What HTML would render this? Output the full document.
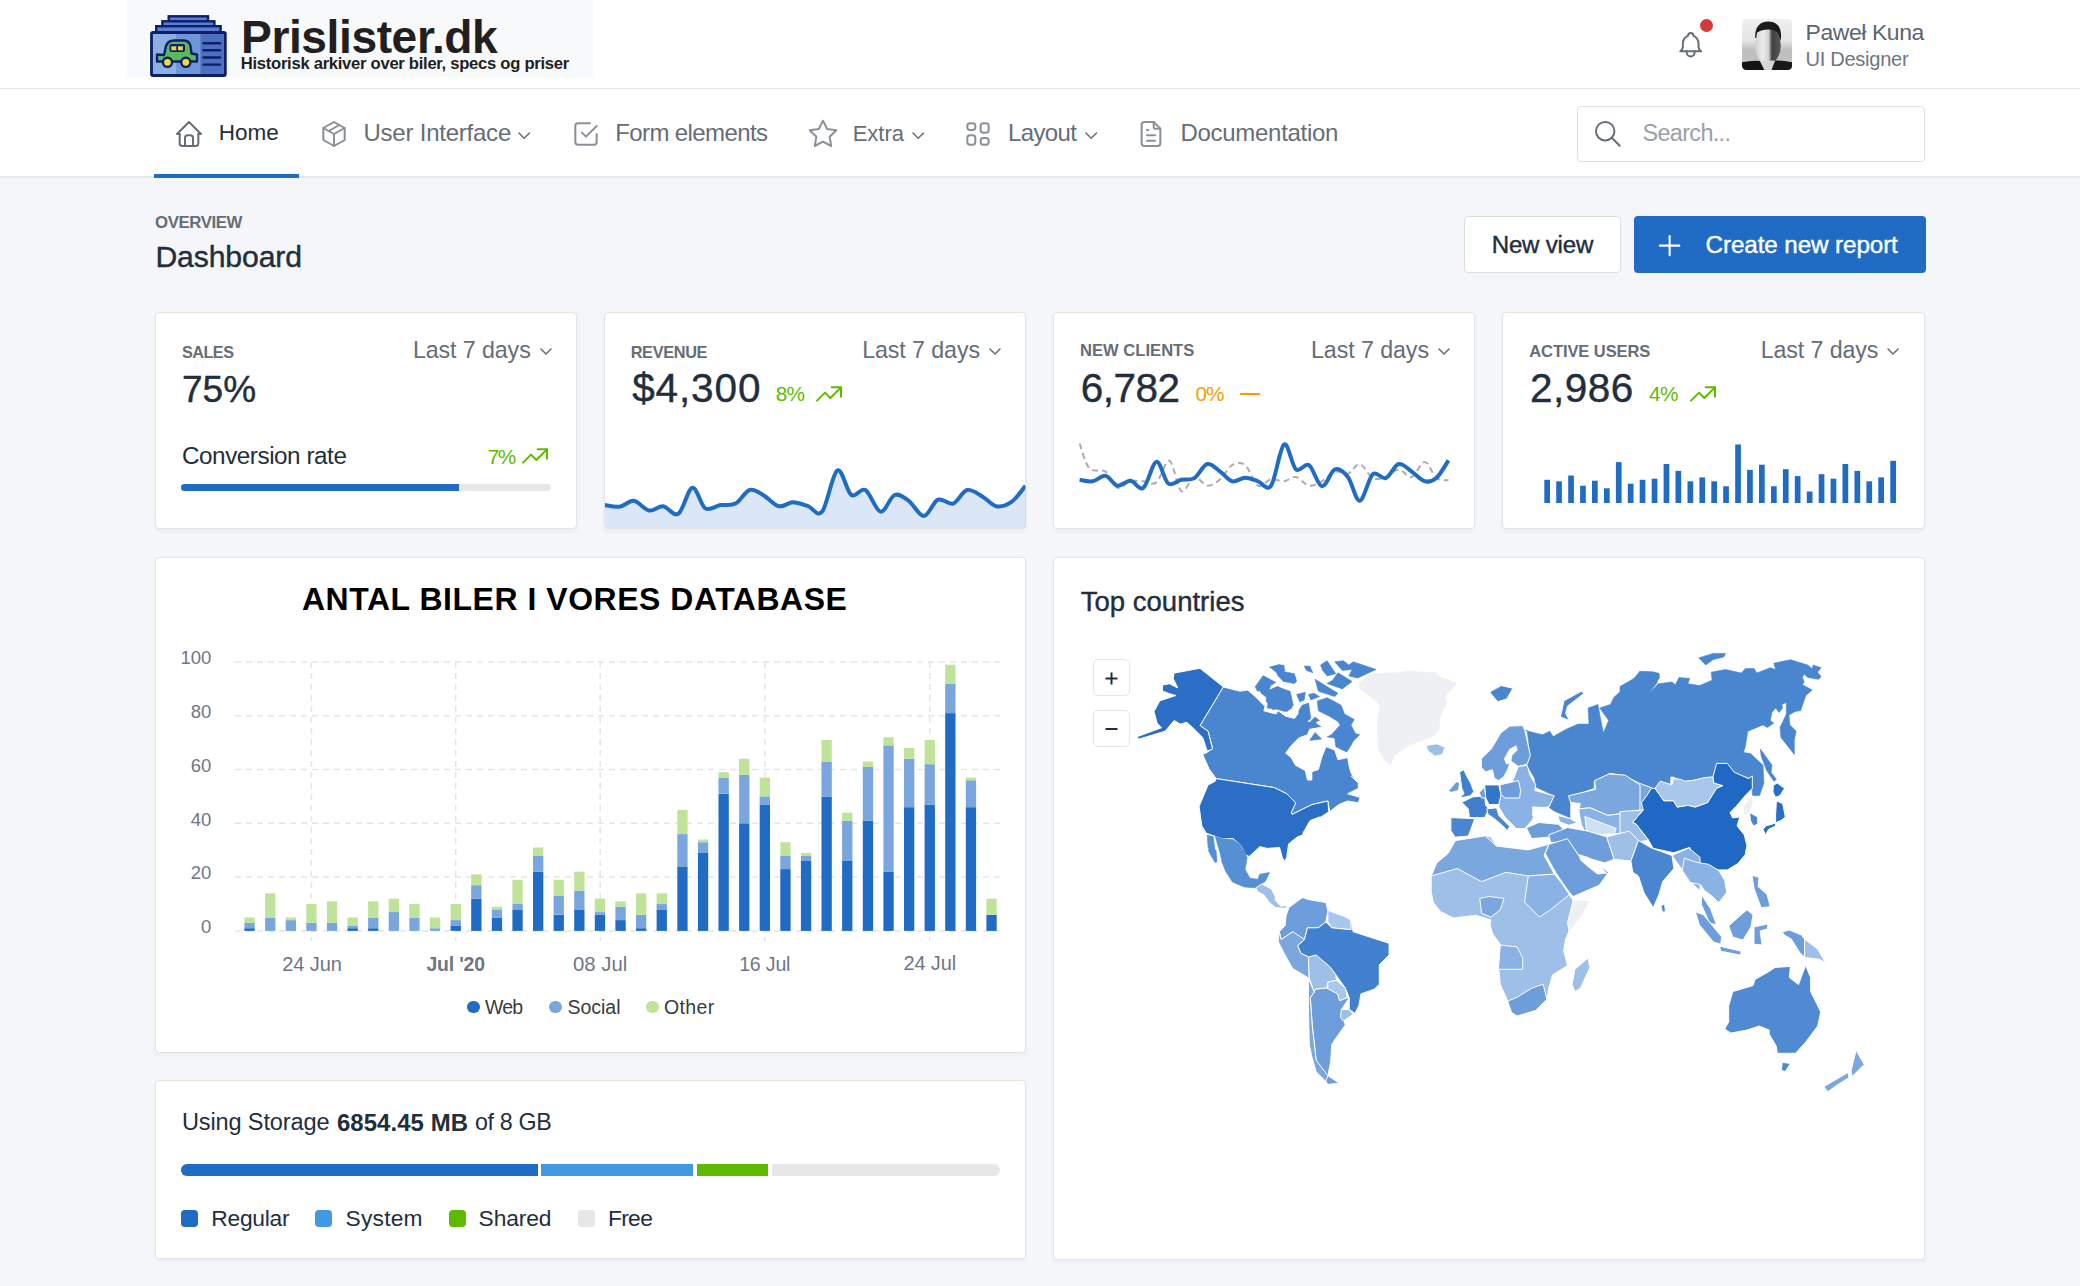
<!DOCTYPE html><html><head><meta charset="utf-8"><title>Dashboard</title><style>
html,body{margin:0;padding:0;}
body{width:2080px;height:1286px;position:relative;overflow:hidden;background:#f4f6fa;font-family:"Liberation Sans",sans-serif;}
.t{position:absolute;line-height:1;white-space:nowrap;}
.card{position:absolute;background:#fff;border:1px solid #e2e4e8;border-radius:4px;box-shadow:0 2px 4px rgba(35,46,60,.05);box-sizing:border-box;}
</style></head><body>
<div style="position:absolute;left:0px;top:0px;width:2080px;height:88px;background:#fff"></div>
<div style="position:absolute;left:0px;top:88px;width:2080px;height:1px;background:#e4e6e9"></div>
<div style="position:absolute;left:0px;top:89px;width:2080px;height:88px;background:#fff"></div>
<div style="position:absolute;left:0px;top:176px;width:2080px;height:2px;background:#e6e8eb"></div>
<div style="position:absolute;left:127px;top:0px;width:466px;height:77px;background:#f8f9fb"></div>
<svg style="position:absolute;left:148px;top:14px" width="82" height="66" viewBox="148 14 82 66">
<rect x="168.7" y="16.3" width="39.3" height="6" fill="#5b7fd0" stroke="#0d1f6b" stroke-width="2.4"/>
<rect x="162.4" y="21.3" width="52" height="6" fill="#5b7fd0" stroke="#0d1f6b" stroke-width="2.4"/>
<rect x="156.2" y="26.2" width="64.4" height="6" fill="#5b7fd0" stroke="#0d1f6b" stroke-width="2.4"/>
<rect x="151.5" y="32.5" width="73.8" height="43" rx="1.5" fill="#6e96d8" stroke="#0d1f6b" stroke-width="2.8"/>
<rect x="153" y="34" width="23" height="40" fill="#8cb0e2"/>
<rect x="200.5" y="34" width="23.3" height="40" fill="#4d6fc0"/>
<g stroke="#0d1f6b" stroke-width="2.4" stroke-linecap="round"><line x1="203.5" y1="43.3" x2="220" y2="43.3"/><line x1="203.5" y1="50.3" x2="220" y2="50.3"/><line x1="203.5" y1="57.5" x2="220" y2="57.5"/><line x1="203.5" y1="64.6" x2="220" y2="64.6"/></g>
<path d="M164 55 L166 46 Q168 40.5 174 40.5 L184 40.5 Q189 40.5 190.5 46 L191.5 53.5 L197 54.5 L197 61.5 L157 61.5 L157 54.5 Z" fill="#5cb85c" stroke="#0d1f6b" stroke-width="2.4" stroke-linejoin="round"/>
<rect x="169.5" y="44" width="15.5" height="8" rx="2" fill="#0d1f6b"/><rect x="171.3" y="46.3" width="5" height="4" fill="#e8d64a"/><rect x="178" y="46.3" width="4.8" height="4" fill="#e8d64a"/>
<circle cx="167.5" cy="62.3" r="4.6" fill="#f2d936" stroke="#0d1f6b" stroke-width="2.4"/>
<circle cx="185.8" cy="62.3" r="4.6" fill="#f2d936" stroke="#0d1f6b" stroke-width="2.4"/>
</svg>
<div class="t" style="left:241.0px;top:13.7px;font-size:46.18px;letter-spacing:-0.42px;color:#231f20;font-weight:700;">Prislister.dk</div>
<div class="t" style="left:240.8px;top:56.0px;font-size:16.63px;letter-spacing:-0.28px;color:#231f20;font-weight:700;">Historisk arkiver over biler, specs og priser</div>
<svg style="position:absolute;left:1674.8px;top:28.8px" width="31.4" height="31.4" viewBox="0 0 24 24" fill="none" stroke="#656d77" stroke-width="1.5" stroke-linecap="round" stroke-linejoin="round"><path d="M10 5a2 2 0 0 1 4 0a7 7 0 0 1 4 6v3a4 4 0 0 0 2 3h-16a4 4 0 0 0 2 -3v-3a7 7 0 0 1 4 -6"/><path d="M9 17v1a3 3 0 0 0 6 0v-1"/></svg>
<div style="position:absolute;left:1699.5px;top:19.25px;width:13px;height:13px;border-radius:50%;background:#d63939"></div>
<svg style="position:absolute;left:1741.8px;top:19.3px" width="50.2" height="51" viewBox="0 0 50.2 51">
<defs><clipPath id="avc"><rect width="50.2" height="51" rx="4.5"/></clipPath>
<linearGradient id="avbg" x1="0" y1="0" x2="0" y2="1"><stop offset="0" stop-color="#efefef"/><stop offset=".42" stop-color="#e4e4e4"/><stop offset=".62" stop-color="#bdbdbd"/><stop offset="1" stop-color="#c6c6c6"/></linearGradient>
<linearGradient id="avface" x1="0" y1="0" x2="1" y2="0"><stop offset="0" stop-color="#d0d0d0"/><stop offset=".3" stop-color="#ececec"/><stop offset=".52" stop-color="#d2d2d2"/><stop offset=".66" stop-color="#404040"/><stop offset="1" stop-color="#575757"/></linearGradient></defs>
<g clip-path="url(#avc)">
<rect width="50.2" height="51" fill="url(#avbg)"/>
<ellipse cx="26" cy="26.5" rx="12.8" ry="18.5" fill="url(#avface)"/>
<path d="M13.2 19 Q12.5 3 26.5 2.5 Q40 3 39 19 L38.2 22 Q36.5 11.5 30 10.8 Q21 9.8 15.2 13.5 L14.2 19 Z" fill="#1b1b1b"/>
<path d="M-1 43.5 Q10 41 18 42 L23 52 L-1 52 Z" fill="#141414"/>
<path d="M51 43.5 Q42 41 33 41.5 L29 52 L51 52 Z" fill="#191919"/>
<path d="M18 42 L33 41.5 L29 52 L23 52 Z" fill="#d6d6d6"/>
</g></svg>
<div class="t" style="left:1805.5px;top:20.6px;font-size:22.95px;letter-spacing:-0.40px;color:#5c6571;">Paweł Kuna</div>
<div class="t" style="left:1805.5px;top:48.5px;font-size:20.13px;letter-spacing:-0.31px;color:#6e7681;">UI Designer</div>
<svg style="position:absolute;left:173.3px;top:117.5px" width="32.0" height="32.0" viewBox="0 0 24 24" fill="none" stroke="#656d77" stroke-width="1.5" stroke-linecap="round" stroke-linejoin="round"><polyline points="5 12 3 12 12 3 21 12 19 12"/><path d="M5 12v7a2 2 0 0 0 2 2h10a2 2 0 0 0 2 -2v-7"/><path d="M9 21v-6a2 2 0 0 1 2 -2h2a2 2 0 0 1 2 2v6"/></svg>
<div class="t" style="left:218.7px;top:122.4px;font-size:22.51px;letter-spacing:0.00px;color:#232e3c;">Home</div>
<svg style="position:absolute;left:317.7px;top:117.5px" width="32.0" height="32.0" viewBox="0 0 24 24" fill="none" stroke="#8a9099" stroke-width="1.5" stroke-linecap="round" stroke-linejoin="round"><polyline points="12 3 20 7.5 20 16.5 12 21 4 16.5 4 7.5 12 3"/><line x1="12" y1="12" x2="20" y2="7.5"/><line x1="12" y1="12" x2="12" y2="21"/><line x1="12" y1="12" x2="4" y2="7.5"/><line x1="16" y1="5.25" x2="8" y2="9.75"/></svg>
<div class="t" style="left:363.5px;top:121.2px;font-size:24.00px;letter-spacing:-0.23px;color:#656d77;">User Interface</div>
<svg style="position:absolute;left:516.8px;top:130.7px" width="14.5" height="9.2"><polyline points="2,2 7.2,7.2 12.5,2" fill="none" stroke="#656d77" stroke-width="1.5" stroke-linecap="round" stroke-linejoin="round"/></svg>
<svg style="position:absolute;left:570.1px;top:117.5px" width="32.0" height="32.0" viewBox="0 0 24 24" fill="none" stroke="#8a9099" stroke-width="1.5" stroke-linecap="round" stroke-linejoin="round"><polyline points="9 11 12 14 20 6"/><path d="M20 12v6a2 2 0 0 1 -2 2h-12a2 2 0 0 1 -2 -2v-12a2 2 0 0 1 2 -2h9"/></svg>
<div class="t" style="left:615.2px;top:121.2px;font-size:24.00px;letter-spacing:-0.60px;color:#656d77;">Form elements</div>
<svg style="position:absolute;left:806.6px;top:117.5px" width="32.0" height="32.0" viewBox="0 0 24 24" fill="none" stroke="#8a9099" stroke-width="1.5" stroke-linecap="round" stroke-linejoin="round"><path d="M12 17.75l-6.172 3.245l1.179 -6.873l-5 -4.867l6.9 -1l3.086 -6.253l3.086 6.253l6.9 1l-5 4.867l1.179 6.873z"/></svg>
<div class="t" style="left:852.7px;top:122.9px;font-size:22.01px;letter-spacing:0.00px;color:#656d77;">Extra</div>
<svg style="position:absolute;left:911.0px;top:130.7px" width="14.5" height="9.2"><polyline points="2,2 7.2,7.2 12.5,2" fill="none" stroke="#656d77" stroke-width="1.5" stroke-linecap="round" stroke-linejoin="round"/></svg>
<svg style="position:absolute;left:962.0px;top:117.5px" width="32.0" height="32.0" viewBox="0 0 24 24" fill="none" stroke="#8a9099" stroke-width="1.5" stroke-linecap="round" stroke-linejoin="round"><rect x="4" y="4" width="6" height="5" rx="2"/><rect x="4" y="13" width="6" height="7" rx="2"/><rect x="14" y="4" width="6" height="7" rx="2"/><rect x="14" y="15" width="6" height="5" rx="2"/></svg>
<div class="t" style="left:1008.0px;top:121.2px;font-size:24.00px;letter-spacing:-0.62px;color:#656d77;">Layout</div>
<svg style="position:absolute;left:1084.2px;top:130.7px" width="14.5" height="9.2"><polyline points="2,2 7.2,7.2 12.5,2" fill="none" stroke="#656d77" stroke-width="1.5" stroke-linecap="round" stroke-linejoin="round"/></svg>
<svg style="position:absolute;left:1134.7px;top:117.5px" width="32.0" height="32.0" viewBox="0 0 24 24" fill="none" stroke="#8a9099" stroke-width="1.5" stroke-linecap="round" stroke-linejoin="round"><path d="M14 3v4a1 1 0 0 0 1 1h4"/><path d="M17 21h-10a2 2 0 0 1 -2 -2v-14a2 2 0 0 1 2 -2h7l5 5v11a2 2 0 0 1 -2 2z"/><line x1="9" y1="9" x2="10" y2="9"/><line x1="9" y1="13" x2="15" y2="13"/><line x1="9" y1="17" x2="15" y2="17"/></svg>
<div class="t" style="left:1180.4px;top:121.2px;font-size:24.00px;letter-spacing:-0.28px;color:#656d77;">Documentation</div>
<div style="position:absolute;left:154px;top:174px;width:145px;height:3.5px;background:#206bc4"></div>
<div style="position:absolute;left:1576.5px;top:105.5px;width:348.5px;height:56px;box-sizing:border-box;border:1.5px solid #dcdfe3;border-radius:4px;background:#fff"></div>
<svg style="position:absolute;left:1592.0px;top:118.0px" width="31.7" height="31.7" viewBox="0 0 24 24" fill="none" stroke="#656d77" stroke-width="1.5" stroke-linecap="round" stroke-linejoin="round"><circle cx="10" cy="10" r="7"/><line x1="21" y1="21" x2="15" y2="15"/></svg>
<div class="t" style="left:1642.5px;top:122.2px;font-size:23.42px;letter-spacing:-0.65px;color:#9aa0ac;">Search...</div>
<div class="t" style="left:155.0px;top:214.7px;font-size:16.80px;letter-spacing:-0.40px;color:#656d77;font-weight:700;">OVERVIEW</div>
<div class="t" style="left:155.4px;top:241.5px;font-size:30.20px;letter-spacing:-0.13px;color:#232e3c;-webkit-text-stroke:0.4px #232e3c;">Dashboard</div>
<div style="position:absolute;left:1464px;top:216px;width:156.5px;height:57px;box-sizing:border-box;border:1.5px solid #dadde1;border-radius:4px;background:#fff"></div>
<div class="t" style="left:1491.7px;top:233.3px;font-size:24.09px;letter-spacing:-0.20px;color:#232e3c;-webkit-text-stroke:0.4px #232e3c;">New view</div>
<div style="position:absolute;left:1633.5px;top:216px;width:292px;height:57px;border-radius:4px;background:#206bc4"></div>
<svg style="position:absolute;left:1653.0px;top:228.6px" width="33.3" height="33.3" viewBox="0 0 24 24" fill="none" stroke="#fff" stroke-width="1.5" stroke-linecap="round" stroke-linejoin="round"><line x1="12" y1="5" x2="12" y2="19"/><line x1="5" y1="12" x2="19" y2="12"/></svg>
<div class="t" style="left:1705.6px;top:233.2px;font-size:24.23px;letter-spacing:-0.10px;color:#fff;-webkit-text-stroke:0.4px #fff;">Create new report</div>
<div class="card" style="left:155px;top:312px;width:422px;height:217px"></div>
<div class="card" style="left:604px;top:312px;width:422px;height:217px"></div>
<div class="card" style="left:1053px;top:312px;width:422px;height:217px"></div>
<div class="card" style="left:1502px;top:312px;width:423px;height:217px"></div>
<div class="t" style="left:182.0px;top:343.7px;font-size:16.18px;letter-spacing:-0.49px;color:#656d77;font-weight:700;">SALES</div>
<div class="t" style="left:412.9px;top:339.3px;font-size:23.23px;letter-spacing:-0.09px;color:#656d77;">Last 7 days</div>
<svg style="position:absolute;left:538.8px;top:346.9px" width="14.0" height="9.0"><polyline points="2,2 7.0,7.0 12.0,2" fill="none" stroke="#656d77" stroke-width="1.5" stroke-linecap="round" stroke-linejoin="round"/></svg>
<div class="t" style="left:182.0px;top:371.1px;font-size:37.00px;letter-spacing:0.00px;color:#232e3c;-webkit-text-stroke:0.4px #232e3c;">75%</div>
<div class="t" style="left:182.0px;top:444.2px;font-size:24.25px;letter-spacing:-0.45px;color:#232e3c;">Conversion rate</div>
<div class="t" style="left:487.8px;top:447.1px;font-size:20.80px;letter-spacing:-1.56px;color:#5eba00;">7%</div>
<svg style="position:absolute;left:519.0px;top:439.5px" width="32.0" height="32.0" viewBox="0 0 24 24" fill="none" stroke="#5eba00" stroke-width="1.5" stroke-linecap="round" stroke-linejoin="round"><polyline points="3 17 9 11 13 15 21 7"/><polyline points="14 7 21 7 21 14"/></svg>
<div style="position:absolute;left:181px;top:484px;width:370px;height:6.5px;border-radius:4px;background:#e6e7e9;overflow:hidden"><div style="width:278px;height:100%;background:#206bc4"></div></div>
<div class="t" style="left:630.7px;top:343.6px;font-size:16.30px;letter-spacing:-0.33px;color:#656d77;font-weight:700;">REVENUE</div>
<div class="t" style="left:862.2px;top:339.3px;font-size:23.23px;letter-spacing:-0.09px;color:#656d77;">Last 7 days</div>
<svg style="position:absolute;left:988.1px;top:346.9px" width="14.0" height="9.0"><polyline points="2,2 7.0,7.0 12.0,2" fill="none" stroke="#656d77" stroke-width="1.5" stroke-linecap="round" stroke-linejoin="round"/></svg>
<div class="t" style="left:632.2px;top:368.1px;font-size:40.50px;letter-spacing:0.87px;color:#232e3c;-webkit-text-stroke:0.4px #232e3c;">$4,300</div>
<div class="t" style="left:775.7px;top:384.1px;font-size:20.80px;letter-spacing:-0.86px;color:#5eba00;">8%</div>
<svg style="position:absolute;left:812.7px;top:377.7px" width="32.0" height="32.0" viewBox="0 0 24 24" fill="none" stroke="#5eba00" stroke-width="1.5" stroke-linecap="round" stroke-linejoin="round"><polyline points="3 17 9 11 13 15 21 7"/><polyline points="14 7 21 7 21 14"/></svg>
<div class="t" style="left:1080.0px;top:343.4px;font-size:16.58px;letter-spacing:0.01px;color:#656d77;font-weight:700;">NEW CLIENTS</div>
<div class="t" style="left:1311.0px;top:339.3px;font-size:23.24px;letter-spacing:-0.08px;color:#656d77;">Last 7 days</div>
<svg style="position:absolute;left:1437.0px;top:346.9px" width="14.0" height="9.0"><polyline points="2,2 7.0,7.0 12.0,2" fill="none" stroke="#656d77" stroke-width="1.5" stroke-linecap="round" stroke-linejoin="round"/></svg>
<div class="t" style="left:1080.7px;top:368.1px;font-size:40.50px;letter-spacing:-0.49px;color:#232e3c;-webkit-text-stroke:0.4px #232e3c;">6,782</div>
<div class="t" style="left:1195.4px;top:384.1px;font-size:20.80px;letter-spacing:-0.86px;color:#f59f00;">0%</div>
<svg style="position:absolute;left:1233.6px;top:377.7px" width="32.0" height="32.0" viewBox="0 0 24 24" fill="none" stroke="#f59f00" stroke-width="1.5" stroke-linecap="round" stroke-linejoin="round"><line x1="5" y1="12" x2="19" y2="12"/></svg>
<div class="t" style="left:1529.2px;top:343.4px;font-size:16.50px;letter-spacing:-0.07px;color:#656d77;font-weight:700;">ACTIVE USERS</div>
<div class="t" style="left:1760.7px;top:339.4px;font-size:23.21px;letter-spacing:-0.10px;color:#656d77;">Last 7 days</div>
<svg style="position:absolute;left:1886.4px;top:346.9px" width="14.0" height="9.0"><polyline points="2,2 7.0,7.0 12.0,2" fill="none" stroke="#656d77" stroke-width="1.5" stroke-linecap="round" stroke-linejoin="round"/></svg>
<div class="t" style="left:1530.0px;top:368.1px;font-size:40.50px;letter-spacing:0.51px;color:#232e3c;-webkit-text-stroke:0.4px #232e3c;">2,986</div>
<div class="t" style="left:1649.0px;top:384.1px;font-size:20.80px;letter-spacing:-0.56px;color:#5eba00;">4%</div>
<svg style="position:absolute;left:1687.4px;top:377.7px" width="32.0" height="32.0" viewBox="0 0 24 24" fill="none" stroke="#5eba00" stroke-width="1.5" stroke-linecap="round" stroke-linejoin="round"><polyline points="3 17 9 11 13 15 21 7"/><polyline points="14 7 21 7 21 14"/></svg>
<svg style="position:absolute;left:0;top:0" width="2080" height="1286"><clipPath id="rc"><rect x="605" y="313" width="420.5" height="215" rx="3"/></clipPath><g clip-path="url(#rc)"><path d="M604.7,505.1 C607.3,505.4 615.0,507.4 619.9,506.6 C624.7,505.9 629.1,500.2 633.9,500.8 C638.8,501.5 644.2,509.6 649.1,510.5 C654.0,511.4 658.3,505.7 663.2,506.2 C668.0,506.8 673.4,516.8 678.3,513.8 C683.2,510.7 687.9,488.7 692.4,487.8 C696.9,486.9 700.7,505.5 705.3,508.4 C710.0,511.3 715.4,505.9 720.5,505.1 C725.5,504.3 730.8,506.1 735.6,503.6 C740.5,501.1 745.0,491.4 749.7,490.0 C754.4,488.6 758.9,492.7 763.8,495.4 C768.6,498.1 774.0,505.1 778.9,506.2 C783.8,507.4 788.1,502.3 793.0,502.3 C797.8,502.3 803.2,504.7 808.1,506.2 C813.0,507.8 817.3,517.6 822.2,511.6 C827.0,505.7 832.5,473.3 837.3,470.5 C842.2,467.7 846.7,491.7 851.4,495.0 C856.1,498.2 860.6,487.2 865.4,490.0 C870.3,492.8 875.7,510.8 880.6,511.6 C885.5,512.4 890.0,496.8 894.7,495.0 C899.3,493.2 903.8,497.3 908.7,500.8 C913.6,504.3 919.0,516.1 923.9,515.9 C928.7,515.8 933.1,501.8 937.9,499.7 C942.8,497.7 948.2,505.2 953.1,503.6 C957.9,502.0 962.3,491.2 967.1,490.0 C972.0,488.8 977.4,493.8 982.3,496.5 C987.1,499.2 991.5,505.3 996.3,506.2 C1001.2,507.1 1006.6,505.3 1011.5,501.9 C1016.4,498.5 1023.2,488.4 1025.5,485.7 L1030,529 L600,529 Z" fill="#206bc4" fill-opacity="0.16"/><path d="M604.7,505.1 C607.3,505.4 615.0,507.4 619.9,506.6 C624.7,505.9 629.1,500.2 633.9,500.8 C638.8,501.5 644.2,509.6 649.1,510.5 C654.0,511.4 658.3,505.7 663.2,506.2 C668.0,506.8 673.4,516.8 678.3,513.8 C683.2,510.7 687.9,488.7 692.4,487.8 C696.9,486.9 700.7,505.5 705.3,508.4 C710.0,511.3 715.4,505.9 720.5,505.1 C725.5,504.3 730.8,506.1 735.6,503.6 C740.5,501.1 745.0,491.4 749.7,490.0 C754.4,488.6 758.9,492.7 763.8,495.4 C768.6,498.1 774.0,505.1 778.9,506.2 C783.8,507.4 788.1,502.3 793.0,502.3 C797.8,502.3 803.2,504.7 808.1,506.2 C813.0,507.8 817.3,517.6 822.2,511.6 C827.0,505.7 832.5,473.3 837.3,470.5 C842.2,467.7 846.7,491.7 851.4,495.0 C856.1,498.2 860.6,487.2 865.4,490.0 C870.3,492.8 875.7,510.8 880.6,511.6 C885.5,512.4 890.0,496.8 894.7,495.0 C899.3,493.2 903.8,497.3 908.7,500.8 C913.6,504.3 919.0,516.1 923.9,515.9 C928.7,515.8 933.1,501.8 937.9,499.7 C942.8,497.7 948.2,505.2 953.1,503.6 C957.9,502.0 962.3,491.2 967.1,490.0 C972.0,488.8 977.4,493.8 982.3,496.5 C987.1,499.2 991.5,505.3 996.3,506.2 C1001.2,507.1 1006.6,505.3 1011.5,501.9 C1016.4,498.5 1023.2,488.4 1025.5,485.7" fill="none" stroke="#206bc4" stroke-width="4" stroke-linejoin="round"/></g>
<path d="M1079.6,443.5 C1081.2,447.6 1085.0,463.7 1089.4,468.3 C1093.7,473.0 1100.9,468.3 1105.6,471.6 C1110.3,474.8 1113.3,486.2 1117.5,487.8 C1121.6,489.4 1126.1,482.4 1130.5,481.3 C1134.8,480.2 1139.1,481.2 1143.4,481.3 C1147.8,481.5 1152.1,485.8 1156.4,482.4 C1160.8,479.0 1165.3,459.3 1169.4,460.8 C1173.6,462.2 1177.2,488.4 1181.3,491.1 C1185.5,493.8 1190.0,477.9 1194.3,477.0 C1198.6,476.1 1202.9,485.3 1207.3,485.7 C1211.6,486.0 1216.1,482.6 1220.2,479.2 C1224.4,475.7 1228.0,467.4 1232.1,465.1 C1236.3,462.8 1240.8,461.7 1245.1,465.1 C1249.5,468.5 1253.8,483.3 1258.1,485.7 C1262.4,488.0 1266.8,479.9 1271.1,479.2 C1275.4,478.4 1279.9,481.7 1284.1,481.3 C1288.2,481.0 1291.8,476.3 1296.0,477.0 C1300.1,477.7 1304.6,484.9 1309.0,485.7 C1313.3,486.4 1317.6,483.7 1321.9,481.3 C1326.3,479.0 1330.6,472.9 1334.9,471.6 C1339.2,470.3 1343.8,475.0 1347.9,473.8 C1352.0,472.5 1355.7,463.3 1359.8,464.0 C1363.9,464.7 1368.5,475.9 1372.8,478.1 C1377.1,480.2 1381.4,478.4 1385.8,477.0 C1390.1,475.6 1394.4,469.4 1398.7,469.4 C1403.1,469.4 1407.4,478.3 1411.7,477.0 C1416.1,475.7 1420.6,461.7 1424.7,461.9 C1428.9,462.0 1432.6,475.0 1436.6,478.1 C1440.6,481.2 1446.5,479.9 1448.5,480.2" fill="none" stroke="#a9aeb5" stroke-width="2" stroke-dasharray="6,4"/>
<path d="M1079.6,479.8 C1081.8,480.1 1088.3,482.0 1092.6,481.3 C1096.9,480.7 1101.4,475.2 1105.6,475.9 C1109.7,476.6 1113.3,484.9 1117.5,485.7 C1121.6,486.5 1126.1,480.3 1130.5,480.7 C1134.8,481.0 1139.1,491.0 1143.4,487.8 C1147.8,484.7 1152.3,462.6 1156.4,461.9 C1160.6,461.1 1164.2,480.5 1168.3,483.5 C1172.5,486.5 1177.0,480.7 1181.3,479.8 C1185.6,478.9 1190.0,480.7 1194.3,478.1 C1198.6,475.5 1202.9,465.1 1207.3,464.0 C1211.6,462.9 1216.1,468.7 1220.2,471.6 C1224.4,474.5 1228.0,480.3 1232.1,481.3 C1236.3,482.3 1240.8,477.7 1245.1,477.7 C1249.5,477.7 1253.8,480.0 1258.1,481.3 C1262.4,482.7 1266.8,491.8 1271.1,485.7 C1275.4,479.5 1279.9,447.3 1284.1,444.5 C1288.2,441.8 1291.8,466.0 1296.0,469.4 C1300.1,472.9 1304.6,462.3 1309.0,465.1 C1313.3,467.9 1317.6,485.6 1321.9,486.3 C1326.3,487.0 1330.6,471.0 1334.9,469.4 C1339.2,467.9 1343.8,471.8 1347.9,477.0 C1352.0,482.2 1355.7,501.3 1359.8,500.8 C1363.9,500.3 1368.5,478.0 1372.8,474.2 C1377.1,470.4 1381.4,479.8 1385.8,478.1 C1390.1,476.4 1394.4,465.1 1398.7,464.0 C1403.1,462.9 1407.4,468.7 1411.7,471.6 C1416.1,474.5 1420.6,480.3 1424.7,481.3 C1428.9,482.3 1432.6,481.2 1436.6,477.7 C1440.6,474.2 1446.5,463.2 1448.5,460.3" fill="none" stroke="#206bc4" stroke-width="4" stroke-linejoin="round"/>
<rect x="1544.3" y="479.8" width="5.7" height="23.2" fill="#206bc4"/>
<rect x="1556.2" y="481.3" width="5.7" height="21.7" fill="#206bc4"/>
<rect x="1568.2" y="475.5" width="5.7" height="27.5" fill="#206bc4"/>
<rect x="1580.1" y="485.7" width="5.7" height="17.3" fill="#206bc4"/>
<rect x="1592.0" y="480.7" width="5.7" height="22.3" fill="#206bc4"/>
<rect x="1604.0" y="488.3" width="5.7" height="14.7" fill="#206bc4"/>
<rect x="1615.9" y="462.1" width="5.7" height="40.9" fill="#206bc4"/>
<rect x="1627.8" y="483.7" width="5.7" height="19.3" fill="#206bc4"/>
<rect x="1639.7" y="479.8" width="5.7" height="23.2" fill="#206bc4"/>
<rect x="1651.7" y="478.7" width="5.7" height="24.3" fill="#206bc4"/>
<rect x="1663.6" y="464.0" width="5.7" height="39.0" fill="#206bc4"/>
<rect x="1675.5" y="470.9" width="5.7" height="32.1" fill="#206bc4"/>
<rect x="1687.5" y="481.3" width="5.7" height="21.7" fill="#206bc4"/>
<rect x="1699.4" y="477.4" width="5.7" height="25.6" fill="#206bc4"/>
<rect x="1711.3" y="481.3" width="5.7" height="21.7" fill="#206bc4"/>
<rect x="1723.2" y="486.3" width="5.7" height="16.7" fill="#206bc4"/>
<rect x="1735.2" y="444.5" width="5.7" height="58.5" fill="#206bc4"/>
<rect x="1747.1" y="469.9" width="5.7" height="33.1" fill="#206bc4"/>
<rect x="1759.0" y="464.7" width="5.7" height="38.3" fill="#206bc4"/>
<rect x="1771.0" y="486.3" width="5.7" height="16.7" fill="#206bc4"/>
<rect x="1782.9" y="469.2" width="5.7" height="33.8" fill="#206bc4"/>
<rect x="1794.8" y="476.1" width="5.7" height="26.9" fill="#206bc4"/>
<rect x="1806.8" y="491.5" width="5.7" height="11.5" fill="#206bc4"/>
<rect x="1818.7" y="474.2" width="5.7" height="28.8" fill="#206bc4"/>
<rect x="1830.6" y="478.7" width="5.7" height="24.3" fill="#206bc4"/>
<rect x="1842.5" y="464.0" width="5.7" height="39.0" fill="#206bc4"/>
<rect x="1854.5" y="470.9" width="5.7" height="32.1" fill="#206bc4"/>
<rect x="1866.4" y="481.3" width="5.7" height="21.7" fill="#206bc4"/>
<rect x="1878.3" y="477.4" width="5.7" height="25.6" fill="#206bc4"/>
<rect x="1890.3" y="460.8" width="5.7" height="42.2" fill="#206bc4"/>
</svg>
<div class="card" style="left:155px;top:557px;width:871px;height:496px"></div>
<div class="t" style="left:302.0px;top:583.6px;font-size:31.93px;letter-spacing:0.56px;color:#000;font-weight:700;">ANTAL BILER I VORES DATABASE</div>
<svg style="position:absolute;left:0;top:0" width="2080" height="1286"><line x1="235" y1="930.9" x2="1000" y2="930.9" stroke="#e3e5e8" stroke-width="1.5" stroke-dasharray="6,5"/><line x1="235" y1="877.1" x2="1000" y2="877.1" stroke="#e3e5e8" stroke-width="1.5" stroke-dasharray="6,5"/><line x1="235" y1="823.3" x2="1000" y2="823.3" stroke="#e3e5e8" stroke-width="1.5" stroke-dasharray="6,5"/><line x1="235" y1="769.6" x2="1000" y2="769.6" stroke="#e3e5e8" stroke-width="1.5" stroke-dasharray="6,5"/><line x1="235" y1="715.8" x2="1000" y2="715.8" stroke="#e3e5e8" stroke-width="1.5" stroke-dasharray="6,5"/><line x1="235" y1="662.0" x2="1000" y2="662.0" stroke="#e3e5e8" stroke-width="1.5" stroke-dasharray="6,5"/><line x1="311.4" y1="662" x2="311.4" y2="941" stroke="#e3e5e8" stroke-width="1.5" stroke-dasharray="6,5"/><line x1="455.7" y1="662" x2="455.7" y2="941" stroke="#e3e5e8" stroke-width="1.5" stroke-dasharray="6,5"/><line x1="600.2" y1="662" x2="600.2" y2="941" stroke="#e3e5e8" stroke-width="1.5" stroke-dasharray="6,5"/><line x1="765" y1="662" x2="765" y2="941" stroke="#e3e5e8" stroke-width="1.5" stroke-dasharray="6,5"/><line x1="929.7" y1="662" x2="929.7" y2="941" stroke="#e3e5e8" stroke-width="1.5" stroke-dasharray="6,5"/><rect x="244.4" y="928.2" width="10.3" height="2.7" fill="#206bc4"/><rect x="244.4" y="922.8" width="10.3" height="5.4" fill="#79a6dc"/><rect x="244.4" y="917.5" width="10.3" height="5.4" fill="#bfe399"/><rect x="265.1" y="917.5" width="10.3" height="13.4" fill="#79a6dc"/><rect x="265.1" y="893.3" width="10.3" height="24.2" fill="#bfe399"/><rect x="285.7" y="920.1" width="10.3" height="10.8" fill="#79a6dc"/><rect x="285.7" y="917.5" width="10.3" height="2.7" fill="#bfe399"/><rect x="306.3" y="922.8" width="10.3" height="8.1" fill="#79a6dc"/><rect x="306.3" y="904.0" width="10.3" height="18.8" fill="#bfe399"/><rect x="326.9" y="922.8" width="10.3" height="8.1" fill="#79a6dc"/><rect x="326.9" y="901.3" width="10.3" height="21.5" fill="#bfe399"/><rect x="347.5" y="928.2" width="10.3" height="2.7" fill="#206bc4"/><rect x="347.5" y="925.5" width="10.3" height="2.7" fill="#79a6dc"/><rect x="347.5" y="917.5" width="10.3" height="8.1" fill="#bfe399"/><rect x="368.1" y="928.2" width="10.3" height="2.7" fill="#206bc4"/><rect x="368.1" y="917.5" width="10.3" height="10.8" fill="#79a6dc"/><rect x="368.1" y="901.3" width="10.3" height="16.1" fill="#bfe399"/><rect x="388.7" y="912.1" width="10.3" height="18.8" fill="#79a6dc"/><rect x="388.7" y="898.6" width="10.3" height="13.4" fill="#bfe399"/><rect x="409.3" y="917.5" width="10.3" height="13.4" fill="#79a6dc"/><rect x="409.3" y="904.0" width="10.3" height="13.4" fill="#bfe399"/><rect x="429.9" y="928.2" width="10.3" height="2.7" fill="#79a6dc"/><rect x="429.9" y="917.5" width="10.3" height="10.8" fill="#bfe399"/><rect x="450.6" y="925.5" width="10.3" height="5.4" fill="#206bc4"/><rect x="450.6" y="920.1" width="10.3" height="5.4" fill="#79a6dc"/><rect x="450.6" y="904.0" width="10.3" height="16.1" fill="#bfe399"/><rect x="471.2" y="898.6" width="10.3" height="32.3" fill="#206bc4"/><rect x="471.2" y="885.2" width="10.3" height="13.4" fill="#79a6dc"/><rect x="471.2" y="874.4" width="10.3" height="10.8" fill="#bfe399"/><rect x="491.8" y="917.5" width="10.3" height="13.4" fill="#206bc4"/><rect x="491.8" y="909.4" width="10.3" height="8.1" fill="#79a6dc"/><rect x="491.8" y="906.7" width="10.3" height="2.7" fill="#bfe399"/><rect x="512.4" y="909.4" width="10.3" height="21.5" fill="#206bc4"/><rect x="512.4" y="904.0" width="10.3" height="5.4" fill="#79a6dc"/><rect x="512.4" y="879.8" width="10.3" height="24.2" fill="#bfe399"/><rect x="533.0" y="871.7" width="10.3" height="59.2" fill="#206bc4"/><rect x="533.0" y="855.6" width="10.3" height="16.1" fill="#79a6dc"/><rect x="533.0" y="847.5" width="10.3" height="8.1" fill="#bfe399"/><rect x="553.6" y="914.8" width="10.3" height="16.1" fill="#206bc4"/><rect x="553.6" y="895.9" width="10.3" height="18.8" fill="#79a6dc"/><rect x="553.6" y="879.8" width="10.3" height="16.1" fill="#bfe399"/><rect x="574.2" y="909.4" width="10.3" height="21.5" fill="#206bc4"/><rect x="574.2" y="890.6" width="10.3" height="18.8" fill="#79a6dc"/><rect x="574.2" y="871.7" width="10.3" height="18.8" fill="#bfe399"/><rect x="594.8" y="914.8" width="10.3" height="16.1" fill="#206bc4"/><rect x="594.8" y="912.1" width="10.3" height="2.7" fill="#79a6dc"/><rect x="594.8" y="898.6" width="10.3" height="13.4" fill="#bfe399"/><rect x="615.4" y="920.1" width="10.3" height="10.8" fill="#206bc4"/><rect x="615.4" y="906.7" width="10.3" height="13.4" fill="#79a6dc"/><rect x="615.4" y="901.3" width="10.3" height="5.4" fill="#bfe399"/><rect x="636.0" y="928.2" width="10.3" height="2.7" fill="#206bc4"/><rect x="636.0" y="914.8" width="10.3" height="13.4" fill="#79a6dc"/><rect x="636.0" y="893.3" width="10.3" height="21.5" fill="#bfe399"/><rect x="656.6" y="909.4" width="10.3" height="21.5" fill="#206bc4"/><rect x="656.6" y="904.0" width="10.3" height="5.4" fill="#79a6dc"/><rect x="656.6" y="893.3" width="10.3" height="10.8" fill="#bfe399"/><rect x="677.3" y="866.4" width="10.3" height="64.5" fill="#206bc4"/><rect x="677.3" y="834.1" width="10.3" height="32.3" fill="#79a6dc"/><rect x="677.3" y="809.9" width="10.3" height="24.2" fill="#bfe399"/><rect x="697.9" y="852.9" width="10.3" height="78.0" fill="#206bc4"/><rect x="697.9" y="842.2" width="10.3" height="10.8" fill="#79a6dc"/><rect x="697.9" y="839.5" width="10.3" height="2.7" fill="#bfe399"/><rect x="718.5" y="793.8" width="10.3" height="137.1" fill="#206bc4"/><rect x="718.5" y="777.6" width="10.3" height="16.1" fill="#79a6dc"/><rect x="718.5" y="772.2" width="10.3" height="5.4" fill="#bfe399"/><rect x="739.1" y="823.3" width="10.3" height="107.6" fill="#206bc4"/><rect x="739.1" y="774.9" width="10.3" height="48.4" fill="#79a6dc"/><rect x="739.1" y="758.8" width="10.3" height="16.1" fill="#bfe399"/><rect x="759.7" y="804.5" width="10.3" height="126.4" fill="#206bc4"/><rect x="759.7" y="796.4" width="10.3" height="8.1" fill="#79a6dc"/><rect x="759.7" y="777.6" width="10.3" height="18.8" fill="#bfe399"/><rect x="780.3" y="869.1" width="10.3" height="61.8" fill="#206bc4"/><rect x="780.3" y="855.6" width="10.3" height="13.4" fill="#79a6dc"/><rect x="780.3" y="842.2" width="10.3" height="13.4" fill="#bfe399"/><rect x="800.9" y="861.0" width="10.3" height="69.9" fill="#206bc4"/><rect x="800.9" y="855.6" width="10.3" height="5.4" fill="#79a6dc"/><rect x="800.9" y="852.9" width="10.3" height="2.7" fill="#bfe399"/><rect x="821.5" y="796.5" width="10.3" height="134.4" fill="#206bc4"/><rect x="821.5" y="761.5" width="10.3" height="35.0" fill="#79a6dc"/><rect x="821.5" y="740.0" width="10.3" height="21.5" fill="#bfe399"/><rect x="842.1" y="861.0" width="10.3" height="69.9" fill="#206bc4"/><rect x="842.1" y="820.7" width="10.3" height="40.3" fill="#79a6dc"/><rect x="842.1" y="812.6" width="10.3" height="8.1" fill="#bfe399"/><rect x="862.8" y="820.7" width="10.3" height="110.2" fill="#206bc4"/><rect x="862.8" y="766.9" width="10.3" height="53.8" fill="#79a6dc"/><rect x="862.8" y="761.5" width="10.3" height="5.4" fill="#bfe399"/><rect x="883.4" y="871.7" width="10.3" height="59.2" fill="#206bc4"/><rect x="883.4" y="745.4" width="10.3" height="126.4" fill="#79a6dc"/><rect x="883.4" y="737.3" width="10.3" height="8.1" fill="#bfe399"/><rect x="904.0" y="807.2" width="10.3" height="123.7" fill="#206bc4"/><rect x="904.0" y="758.8" width="10.3" height="48.4" fill="#79a6dc"/><rect x="904.0" y="748.0" width="10.3" height="10.8" fill="#bfe399"/><rect x="924.6" y="804.5" width="10.3" height="126.4" fill="#206bc4"/><rect x="924.6" y="764.2" width="10.3" height="40.3" fill="#79a6dc"/><rect x="924.6" y="740.0" width="10.3" height="24.2" fill="#bfe399"/><rect x="945.2" y="713.1" width="10.3" height="217.8" fill="#206bc4"/><rect x="945.2" y="683.5" width="10.3" height="29.6" fill="#79a6dc"/><rect x="945.2" y="664.7" width="10.3" height="18.8" fill="#bfe399"/><rect x="965.8" y="807.2" width="10.3" height="123.7" fill="#206bc4"/><rect x="965.8" y="780.3" width="10.3" height="26.9" fill="#79a6dc"/><rect x="965.8" y="777.6" width="10.3" height="2.7" fill="#bfe399"/><rect x="986.4" y="914.8" width="10.3" height="16.1" fill="#206bc4"/><rect x="986.4" y="898.6" width="10.3" height="16.1" fill="#bfe399"/></svg>
<div class="t" style="left:180.4px;top:649.2px;font-size:18.50px;letter-spacing:0.00px;color:#6e7687;">100</div>
<div class="t" style="left:190.8px;top:703.0px;font-size:18.50px;letter-spacing:-0.00px;color:#6e7687;">80</div>
<div class="t" style="left:190.8px;top:756.8px;font-size:18.50px;letter-spacing:-0.00px;color:#6e7687;">60</div>
<div class="t" style="left:190.8px;top:810.6px;font-size:18.50px;letter-spacing:-0.00px;color:#6e7687;">40</div>
<div class="t" style="left:190.8px;top:864.4px;font-size:18.50px;letter-spacing:-0.00px;color:#6e7687;">20</div>
<div class="t" style="left:201.0px;top:918.1px;font-size:18.50px;letter-spacing:0.00px;color:#6e7687;">0</div>
<div class="t" style="left:282.2px;top:954.3px;font-size:20.01px;letter-spacing:-0.09px;color:#6e7687;">24 Jun</div>
<div class="t" style="left:426.5px;top:954.8px;font-size:19.42px;letter-spacing:-0.20px;color:#6e7687;font-weight:700;">Jul '20</div>
<div class="t" style="left:573.0px;top:954.0px;font-size:20.34px;letter-spacing:-0.00px;color:#6e7687;">08 Jul</div>
<div class="t" style="left:739.2px;top:954.6px;font-size:19.55px;letter-spacing:-0.18px;color:#6e7687;">16 Jul</div>
<div class="t" style="left:903.4px;top:954.3px;font-size:19.95px;letter-spacing:-0.09px;color:#6e7687;">24 Jul</div>
<div style="position:absolute;left:467.2px;top:1000.8px;width:12.4px;height:12.4px;border-radius:50%;background:#206bc4"></div>
<div style="position:absolute;left:549.3px;top:1000.8px;width:12.4px;height:12.4px;border-radius:50%;background:#79a6dc"></div>
<div style="position:absolute;left:646.2px;top:1000.8px;width:12.4px;height:12.4px;border-radius:50%;background:#bfe399"></div>
<div class="t" style="left:485.0px;top:998.2px;font-size:19.50px;letter-spacing:-0.79px;color:#373d3f;">Web</div>
<div class="t" style="left:567.5px;top:998.2px;font-size:19.50px;letter-spacing:-0.03px;color:#373d3f;">Social</div>
<div class="t" style="left:664.0px;top:998.2px;font-size:19.50px;letter-spacing:0.39px;color:#373d3f;">Other</div>
<div class="card" style="left:155px;top:1080px;width:871px;height:179px"></div>
<div class="t" style="left:181.9px;top:1110.8px;font-size:23.57px;letter-spacing:-0.14px;color:#232e3c;">Using Storage</div>
<div class="t" style="left:337.0px;top:1110.5px;font-size:23.94px;letter-spacing:0.06px;color:#232e3c;font-weight:700;">6854.45 MB</div>
<div class="t" style="left:475.0px;top:1111.1px;font-size:23.23px;letter-spacing:-0.34px;color:#232e3c;">of 8 GB</div>
<div style="position:absolute;left:181px;top:1163.8px;width:819px;height:12.5px;border-radius:6px;background:#e6e7e9;overflow:hidden;display:flex"><div style="width:357px;background:#206bc4"></div><div style="width:3.4px;background:#fff"></div><div style="width:151.9px;background:#4299e1"></div><div style="width:3.4px;background:#fff"></div><div style="width:71.5px;background:#5eba00"></div><div style="width:3.4px;background:#fff"></div></div>
<div style="position:absolute;left:181.2px;top:1209.5px;width:17.2px;height:17px;border-radius:4px;background:#206bc4"></div>
<div style="position:absolute;left:315px;top:1209.5px;width:17.2px;height:17px;border-radius:4px;background:#4299e1"></div>
<div style="position:absolute;left:449px;top:1209.5px;width:17.2px;height:17px;border-radius:4px;background:#5eba00"></div>
<div style="position:absolute;left:577.5px;top:1209.5px;width:17.2px;height:17px;border-radius:4px;background:#e6e7e9"></div>
<div class="t" style="left:211.3px;top:1206.7px;font-size:22.80px;letter-spacing:-0.25px;color:#232e3c;">Regular</div>
<div class="t" style="left:345.5px;top:1206.7px;font-size:22.80px;letter-spacing:0.21px;color:#232e3c;">System</div>
<div class="t" style="left:478.6px;top:1206.7px;font-size:22.80px;letter-spacing:-0.15px;color:#232e3c;">Shared</div>
<div class="t" style="left:607.9px;top:1206.7px;font-size:22.80px;letter-spacing:-0.65px;color:#232e3c;">Free</div>
<div class="card" style="left:1053px;top:557px;width:872px;height:703px"></div>
<div class="t" style="left:1080.7px;top:588.1px;font-size:27.51px;letter-spacing:0.02px;color:#232e3c;-webkit-text-stroke:0.4px #232e3c;">Top countries</div>
<svg style="position:absolute;left:0;top:0" width="2080" height="1286"><g stroke="#fff" stroke-width="1" stroke-linejoin="round"><polygon points="1359.7,682.5 1370.6,673.7 1396.8,672.7 1406.6,671.0 1436.0,672.7 1440.3,677.0 1456.6,683.5 1444.7,696.6 1446.8,703.1 1440.3,716.2 1439.2,729.3 1433.8,735.8 1408.7,745.6 1394.6,755.4 1390.2,765.2 1384.8,759.7 1378.3,748.9 1377.2,727.1 1378.3,716.2 1380.4,705.3 1370.6,696.6 1359.7,689.0" fill="#eef0f3" stroke="#eef0f3" stroke-width="0.6"/><polygon points="1223.3,686.9 1240.0,691.2 1247.6,690.1 1254.2,695.5 1265.0,706.4 1263.9,710.8 1275.9,714.0 1278.1,710.8 1285.7,716.2 1294.4,718.4 1297.7,714.0 1301.0,710.8 1301.0,718.4 1309.7,721.6 1315.1,716.2 1320.6,720.6 1316.2,722.7 1322.7,727.1 1309.7,729.3 1307.5,734.7 1298.8,738.0 1291.2,745.6 1285.7,753.2 1291.2,757.6 1295.5,765.2 1305.3,770.6 1307.5,780.0 1311.8,780.0 1311.8,771.7 1318.4,769.5 1321.6,757.6 1326.0,746.7 1334.7,749.9 1338.0,759.7 1347.8,757.6 1348.9,765.2 1351.0,772.8 1355.4,780.0 1351.2,776.0 1358.3,783.1 1358.3,788.5 1347.6,793.8 1360.1,797.4 1358.3,802.8 1347.6,801.0 1338.7,804.6 1329.7,811.7 1327.9,801.0 1311.8,804.6 1292.1,814.4 1291.3,812.6 1295.7,802.8 1286.8,793.8 1274.3,787.6 1216.1,778.6 1209.0,768.8 1202.7,754.5 1208.1,751.8 1212.5,748.2 1208.1,731.2 1200.0,725.5" fill="#4a86d0"/><polygon points="1353.2,661.8 1376.1,669.4 1357.6,678.1 1348.9,675.9 1352.1,669.4 1342.3,670.5 1334.7,661.8 1343.4,660.7 1348.9,665.0" fill="#4a86d0" stroke="#4a86d0" stroke-width="0.6"/><polygon points="1320.6,665.0 1327.1,660.7 1335.8,673.7 1327.1,675.9 1322.7,670.5" fill="#4a86d0" stroke="#4a86d0" stroke-width="0.6"/><polygon points="1338.0,672.7 1352.1,681.4 1342.3,689.0 1327.1,683.5 1332.5,680.3" fill="#4a86d0" stroke="#4a86d0" stroke-width="0.6"/><polygon points="1315.1,679.2 1338.0,693.3 1334.7,696.6 1318.4,691.2" fill="#4a86d0" stroke="#4a86d0" stroke-width="0.6"/><polygon points="1255.2,686.8 1262.9,675.9 1275.9,682.5 1261.8,690.1 1257.4,691.2" fill="#4a86d0" stroke="#4a86d0" stroke-width="0.6"/><polygon points="1269.4,667.2 1279.2,664.5 1284.6,666.1 1279.2,670.5" fill="#4a86d0" stroke="#4a86d0" stroke-width="0.6"/><polygon points="1277.0,674.8 1283.5,671.6 1294.4,673.7 1296.6,681.4 1294.4,683.5 1283.5,681.4" fill="#4a86d0" stroke="#4a86d0" stroke-width="0.6"/><polygon points="1266.7,692.3 1277.0,686.8 1290.1,691.2 1293.3,705.3 1286.8,711.8 1282.5,707.5 1272.7,709.7 1266.1,701.0" fill="#4a86d0" stroke="#4a86d0" stroke-width="0.6"/><polygon points="1296.6,694.4 1305.3,692.3 1304.2,699.9 1299.9,702.1" fill="#4a86d0" stroke="#4a86d0" stroke-width="0.6"/><polygon points="1308.6,694.4 1314.0,693.3 1319.5,696.6 1310.8,699.9" fill="#4a86d0" stroke="#4a86d0" stroke-width="0.6"/><polygon points="1304.2,666.1 1309.7,666.1 1312.9,672.7 1306.4,670.5" fill="#4a86d0" stroke="#4a86d0" stroke-width="0.6"/><polygon points="1317.3,701.0 1327.1,697.7 1333.6,701.0 1341.2,705.3 1344.5,714.0 1354.3,719.5 1351.0,724.9 1355.4,733.6 1359.7,734.7 1353.2,741.2 1351.0,745.6 1346.7,752.1 1335.8,746.7 1334.7,738.0 1327.1,736.9 1331.4,734.7 1340.2,724.9 1338.0,721.6 1329.3,716.2 1318.4,710.8" fill="#4a86d0" stroke="#4a86d0" stroke-width="0.6"/><polygon points="1302.1,705.3 1308.6,703.1 1310.8,718.4 1305.3,722.7 1298.8,720.6 1298.8,710.8" fill="#4a86d0" stroke="#4a86d0" stroke-width="0.6"/><polygon points="1309.7,740.2 1315.1,732.5 1321.6,739.1 1311.8,740.2" fill="#4a86d0" stroke="#4a86d0" stroke-width="0.6"/><polygon points="1256.4,686.5 1263.5,675.8 1272.5,681.1 1268.9,690.1 1277.8,686.5 1286.8,691.9 1288.6,700.8 1292.1,708.0 1285.0,711.6 1276.0,708.9 1267.1,708.0 1268.9,699.0 1261.7,693.7" fill="#4a86d0" stroke="#4a86d0" stroke-width="0.6"/><polygon points="1270.7,667.7 1283.2,665.0 1285.0,670.4 1279.6,675.8 1286.8,674.0 1295.7,677.6 1293.9,682.9 1283.2,681.1 1276.0,672.2" fill="#4a86d0" stroke="#4a86d0" stroke-width="0.6"/><polygon points="1174.1,673.1 1200.0,668.3 1223.3,686.9 1200.0,725.5 1208.1,731.2 1212.5,749.1 1207.2,750.9 1202.7,737.5 1192.0,726.8 1186.6,722.3 1180.3,724.1 1174.1,720.5 1165.1,731.2 1138.3,739.3 1137.4,736.6 1161.6,727.7 1157.1,723.2 1154.0,711.6 1159.8,700.8 1175.9,695.5 1169.6,693.7 1162.5,691.0 1162.5,685.1 1169.6,683.8 1177.7,687.9 1173.2,678.5" fill="#2a6fc5"/><polygon points="1216.1,778.6 1274.3,787.6 1286.8,793.8 1295.7,802.8 1291.3,812.6 1292.1,814.4 1311.8,804.6 1327.9,801.0 1328.8,811.7 1320.8,817.1 1319.0,817.1 1310.0,820.7 1302.9,833.2 1302.9,835.0 1297.5,836.8 1288.6,843.9 1286.8,856.5 1285.0,861.8 1282.3,857.4 1279.6,847.5 1267.1,848.4 1259.9,846.6 1249.2,856.5 1245.6,854.7 1240.3,844.8 1233.1,838.6 1221.5,838.6 1206.3,833.2 1201.8,826.0 1199.1,806.4 1208.1,784.9 1215.2,781.3" fill="#2a6fc5"/><polygon points="1219.9,850.0 1244.2,850.0 1247.1,857.8 1245.1,869.4 1250.0,878.2 1257.8,879.2 1259.7,874.3 1269.5,872.4 1265.6,881.1 1261.7,884.0 1255.8,887.9 1244.2,887.0 1232.5,882.1 1225.7,871.4 1221.8,861.7" fill="#5590d5" stroke="#5590d5" stroke-width="0.6"/><polygon points="1208.2,850.0 1216.0,850.0 1217.0,861.7 1215.0,862.6 1211.1,855.8" fill="#5590d5" stroke="#5590d5" stroke-width="0.6"/><polygon points="1215.2,835.9 1221.5,838.6 1233.1,839.5 1240.3,844.8 1245.6,855.6 1243.8,857.4 1221.5,857.4 1217.9,845.7" fill="#5590d5" stroke="#5590d5" stroke-width="0.6"/><polygon points="1207.2,835.0 1213.4,836.8 1216.1,861.8 1211.6,854.7 1208.1,847.5" fill="#5590d5" stroke="#5590d5" stroke-width="0.6"/><polygon points="1255.8,887.9 1261.7,884.0 1271.4,888.9 1275.3,896.7 1275.3,900.6 1281.1,906.4 1285.0,905.4 1288.9,907.4 1283.1,908.3 1275.3,907.4 1269.5,902.5 1263.6,894.7 1257.8,891.8" fill="#9dbfe8"/><polygon points="1288.9,907.4 1302.5,897.6 1308.4,899.6 1325.9,902.5 1327.8,910.3 1325.9,922.0 1318.1,927.8 1307.4,927.8 1304.5,939.5 1296.7,937.5 1292.8,931.7 1281.1,939.5 1279.2,931.7 1285.0,925.8 1286.0,916.1" fill="#6d9edb"/><polygon points="1327.8,910.3 1343.4,916.1 1351.1,920.0 1351.1,929.7 1331.7,927.8 1327.8,922.0" fill="#a9c6eb"/><polygon points="1307.4,927.8 1318.1,927.8 1325.9,922.0 1331.7,927.8 1351.1,929.7 1351.1,919.0 1353.1,931.7 1389.1,943.3 1389.1,955.0 1379.3,964.7 1379.3,984.2 1374.5,989.1 1360.9,993.9 1358.9,1005.6 1355.0,1013.4 1349.2,1009.5 1349.2,997.8 1345.3,988.1 1335.6,974.5 1329.7,966.7 1316.1,956.0 1308.4,957.0 1300.6,953.1 1297.7,945.3 1304.5,939.5" fill="#4281d0"/><polygon points="1279.2,931.7 1281.1,939.5 1292.8,931.7 1304.5,939.5 1297.7,945.3 1300.6,953.1 1308.4,957.0 1309.3,978.4 1292.8,968.6 1285.0,955.0 1278.2,941.4" fill="#7ba7df"/><polygon points="1308.4,957.0 1316.1,955.0 1329.7,966.7 1335.6,974.5 1336.6,980.3 1327.8,982.2 1326.8,988.1 1316.1,989.1 1314.2,992.0 1309.3,978.4" fill="#9dbfe8"/><polygon points="1327.8,982.2 1336.6,980.3 1345.3,988.1 1347.3,997.8 1339.5,1000.7 1337.5,993.9 1327.8,989.1" fill="#a9c6eb"/><polygon points="1314.2,992.0 1316.1,989.1 1326.8,988.1 1337.5,993.9 1339.5,1000.7 1347.3,997.8 1349.2,997.8 1341.4,1009.5 1345.3,1025.0 1335.6,1038.6 1331.7,1044.5 1330.7,1062.0 1327.8,1075.6 1339.5,1083.4 1327.8,1084.3 1320.0,1073.6 1316.1,1060.0 1312.2,1025.0 1310.3,997.8" fill="#6d9edb"/><polygon points="1308.4,978.4 1314.2,992.0 1310.3,997.8 1312.2,1025.0 1316.1,1060.0 1327.8,1075.6 1325.9,1081.4 1316.1,1071.7 1312.2,1058.1 1309.3,1044.5 1308.4,1005.6" fill="#7ba7df"/><polygon points="1341.4,1009.5 1349.2,1009.5 1353.1,1014.3 1343.4,1021.1 1340.4,1017.3" fill="#9dbfe8"/><polygon points="1426.2,745.5 1436.9,743.8 1445.0,747.3 1442.3,754.5 1435.1,756.3 1428.0,750.9" fill="#9dbfe8"/><polygon points="1489.7,691.9 1501.3,685.6 1513.0,688.3 1506.7,699.0 1497.7,701.7 1492.4,695.5" fill="#4a86d0"/><polygon points="1563.9,700.8 1581.8,691.0 1583.6,693.7 1567.5,706.2 1565.7,713.3 1569.3,720.5 1560.4,716.9 1562.1,709.8" fill="#4a86d0"/><polygon points="1620.0,686.5 1637.0,676.7 1639.7,671.3 1653.1,671.8 1659.3,674.0 1659.3,678.4 1649.5,688.3 1650.4,691.9 1658.4,683.8 1671.9,682.0 1675.4,684.7 1679.0,677.5 1689.7,678.4 1687.9,683.8 1699.6,685.6 1712.1,680.2 1711.2,672.2 1725.5,669.5 1741.6,673.1 1745.2,668.6 1754.1,668.6 1756.8,673.1 1770.2,667.7 1775.6,669.5 1773.8,663.2 1790.7,659.7 1807.7,665.0 1812.2,668.6 1813.1,665.0 1821.1,667.7 1817.6,672.2 1821.1,676.7 1818.5,679.3 1807.7,677.5 1804.2,674.0 1802.4,677.5 1804.2,682.0 1802.4,684.7 1812.2,690.1 1805.9,695.4 1800.6,710.6 1795.2,711.5 1789.0,715.1 1789.9,724.9 1796.1,731.2 1794.3,740.1 1794.3,754.4 1780.9,737.4 1780.0,727.6 1786.3,714.2 1786.3,702.6 1781.8,704.4 1782.7,707.9 1779.1,712.4 1775.6,707.9 1772.0,712.4 1770.2,720.5 1773.8,723.1 1767.5,727.6 1763.0,724.9 1747.8,731.2 1745.2,747.3 1743.4,752.6 1750.5,753.5 1763.0,765.2 1763.9,783.0 1759.5,795.6 1752.3,795.6 1752.3,775.9 1748.7,777.7 1734.4,772.3 1727.3,763.4 1716.5,763.4 1713.9,776.8 1704.0,777.7 1684.4,781.2 1671.9,775.9 1654.9,788.4 1646.8,786.6 1634.3,784.8 1624.5,775.9 1620.0,777.7" fill="#4a86d0" stroke="#4a86d0" stroke-width="0.6"/><polygon points="1760.4,749.1 1772.0,765.2 1771.1,772.3 1776.4,779.5 1773.8,781.2 1766.6,770.5 1761.2,756.2" fill="#4a86d0" stroke="#4a86d0" stroke-width="0.6"/><polygon points="1698.7,657.9 1713.0,653.4 1725.5,653.4 1723.7,657.0 1713.0,659.7 1705.8,665.0" fill="#4a86d0" stroke="#4a86d0" stroke-width="0.6"/><polygon points="1524.6,730.3 1542.5,734.8 1549.6,731.2 1553.2,736.6 1565.7,729.4 1578.2,724.1 1589.0,724.1 1588.1,708.0 1597.9,704.4 1603.3,733.0 1608.7,720.5 1599.7,708.0 1610.4,704.4 1614.0,697.2 1631.9,681.1 1639.1,672.2 1658.7,673.1 1657.0,682.9 1649.8,691.9 1670.0,682.9 1670.0,786.7 1653.4,788.5 1639.1,783.1 1624.8,776.0 1610.4,773.3 1625.1,775.1 1608.8,774.0 1594.6,780.6 1595.7,789.3 1568.5,795.8 1570.6,802.3 1573.9,810.0 1575.0,819.8 1548.9,808.9 1554.3,795.8 1535.8,787.1 1534.7,778.4 1527.1,765.3 1530.4,755.5 1527.1,730.5" fill="#4a86d0" stroke="#4a86d0" stroke-width="0.6"/><polygon points="1569.3,797.4 1594.3,788.5 1594.3,781.3 1610.4,773.3 1624.8,776.0 1639.1,783.1 1653.4,788.5 1642.6,811.7 1624.8,815.3 1610.4,817.1 1599.7,811.7 1590.8,808.2 1578.2,811.7 1574.7,801.0" fill="#7ba7df"/><polygon points="1568.5,795.8 1595.7,789.3 1594.6,780.6 1608.8,774.0 1625.1,775.1 1640.0,784.9 1640.0,811.1 1625.1,813.2 1607.7,815.4 1590.2,807.8 1580.4,808.9 1576.1,804.5 1570.6,802.3" fill="#7ba7df"/><polygon points="1578.3,808.9 1590.2,807.8 1607.7,815.4 1625.1,813.2 1640.0,811.1 1640.0,830.6 1614.2,833.9 1587.0,835.0 1581.5,825.2" fill="#8ab2e4"/><polygon points="1584.8,816.5 1616.4,828.5 1614.2,833.9 1587.0,835.0" fill="#cfe0f5"/><polygon points="1570.6,802.3 1580.4,803.4 1578.3,815.4 1581.5,825.2 1576.1,828.5 1570.6,819.8" fill="#ffffff" stroke="#ffffff" stroke-width="0.6"/><polygon points="1557.6,815.4 1570.6,818.7 1577.2,823.0 1568.5,825.2 1559.8,821.9" fill="#8ab2e4"/><polygon points="1654.9,788.4 1660.2,781.2 1671.9,784.8 1673.6,778.6 1681.7,779.5 1684.4,781.2 1693.3,780.4 1704.0,777.7 1713.0,776.8 1713.9,783.0 1722.8,785.7 1716.5,788.4 1707.6,802.7 1695.1,807.2 1687.9,805.4 1677.2,807.2 1673.6,800.9 1663.8,800.9" fill="#a9c6eb"/><polygon points="1654.9,788.4 1663.8,800.9 1673.6,800.9 1677.2,807.2 1687.9,805.4 1695.1,807.2 1707.6,802.7 1716.5,788.4 1722.8,785.7 1713.9,783.0 1713.0,776.8 1716.5,763.4 1727.3,763.4 1734.4,772.3 1748.7,778.6 1752.3,775.9 1752.3,788.4 1745.2,795.6 1736.2,806.3 1730.0,812.5 1732.6,817.9 1739.8,817.0 1737.1,825.9 1744.3,834.9 1746.9,845.6 1745.2,854.6 1738.0,863.5 1727.3,869.9 1698.7,869.9 1689.7,847.4 1673.6,852.8 1653.1,848.3 1648.6,840.3 1636.1,824.2 1632.5,822.4 1643.2,809.9 1641.5,802.7 1646.8,795.6 1651.3,788.4" fill="#1f69c4"/><polygon points="1620.0,811.6 1643.2,809.9 1632.5,822.4 1636.1,824.2 1648.6,840.3 1637.9,842.0 1620.0,833.1" fill="#9dbfe8"/><polygon points="1743.4,806.3 1752.3,795.6 1753.2,800.9 1750.5,811.6 1745.2,816.1 1743.4,811.6" fill="#eef0f3"/><polygon points="1749.6,812.5 1757.7,817.0 1757.7,824.2 1753.2,825.9 1750.5,820.6" fill="#4a86d0"/><polygon points="1773.4,785.2 1777.3,783.0 1784.5,788.4 1780.0,795.6 1775.6,797.3 1772.9,792.0" fill="#2a6fc5"/><polygon points="1776.4,800.9 1782.7,803.6 1785.4,817.0 1780.9,820.6 1772.0,824.2 1765.7,825.9 1763.0,829.5 1765.7,834.9 1768.4,829.5 1775.6,825.9 1775.6,815.2" fill="#2a6fc5"/><polygon points="1481.4,758.8 1491.2,749.0 1501.0,732.7 1509.7,726.1 1522.7,725.6 1524.9,730.5 1530.4,755.5 1527.1,764.2 1518.4,766.4 1510.8,761.0 1507.5,769.7 1504.2,776.2 1498.8,780.6 1494.4,778.4 1492.3,769.7 1485.7,771.9 1481.4,767.5" fill="#6d9edb"/><polygon points="1504.2,758.8 1509.7,749.0 1516.2,745.7 1517.3,750.1 1511.9,755.5 1510.8,763.1 1506.4,764.2" fill="#ffffff" stroke="#ffffff" stroke-width="0.6"/><polygon points="1518.4,766.4 1527.1,765.3 1530.4,776.2 1535.8,784.9 1534.7,790.4 1554.3,795.8 1548.9,806.7 1535.8,808.9 1532.5,819.8 1524.9,828.5 1516.2,828.5 1505.3,817.6 1498.8,806.7 1501.0,784.9 1511.9,782.7" fill="#8ab2e4"/><polygon points="1499.9,784.9 1518.4,780.6 1520.6,790.4 1519.5,798.0 1505.3,798.0 1501.0,794.7" fill="#6d9edb"/><polygon points="1459.6,771.9 1464.0,769.7 1466.1,775.1 1470.5,782.7 1473.8,791.5 1470.5,795.8 1459.6,798.0 1464.0,793.6 1461.8,788.2 1460.7,780.6" fill="#3f7fcd"/><polygon points="1448.7,790.4 1456.3,781.7 1459.6,782.7 1458.5,790.4 1450.9,792.5" fill="#6d9edb"/><polygon points="1461.8,802.3 1472.7,796.9 1484.6,795.8 1485.7,805.6 1489.0,808.9 1484.6,817.6 1469.4,817.6 1468.3,808.9" fill="#3f7fcd"/><polygon points="1484.6,784.9 1498.8,784.9 1501.0,794.7 1498.8,804.5 1489.0,804.5 1485.7,798.0" fill="#3377c9"/><polygon points="1486.8,808.9 1496.6,807.8 1498.8,815.4 1509.7,826.3 1507.5,830.6 1502.1,825.2 1494.4,818.7 1487.9,814.3" fill="#4a86d0"/><polygon points="1450.9,817.6 1474.8,818.7 1468.3,836.1 1455.2,837.2 1450.9,830.6" fill="#4a86d0"/><polygon points="1479.2,792.5 1484.6,787.1 1485.7,798.0 1481.4,798.0" fill="#6d9edb"/><polygon points="1532.5,806.7 1548.9,807.8 1558.7,815.4 1555.4,823.0 1538.0,821.9 1532.5,815.4" fill="#ffffff" stroke="#ffffff" stroke-width="0.6"/><polygon points="1526.4,827.8 1538.9,822.5 1558.6,824.3 1567.5,833.2 1553.2,836.8 1531.7,838.6" fill="#6d9edb"/><polygon points="1567.5,827.5 1588.0,831.2 1606.7,836.8 1614.1,859.2 1604.8,862.9 1578.7,855.5 1569.3,842.4 1550.7,842.4 1548.8,834.9" fill="#6d9edb"/><polygon points="1606.7,836.8 1629.1,831.2 1638.4,840.5 1630.9,861.1 1614.1,859.2" fill="#9dbfe8"/><polygon points="1548.8,844.3 1567.5,838.7 1578.7,855.5 1599.2,864.8 1608.5,872.3 1599.2,885.3 1573.1,896.5 1561.9,883.5 1554.4,874.1 1544.1,855.5" fill="#6d9edb"/><polygon points="1630.9,861.1 1638.4,840.5 1651.5,848.0 1672.0,855.5 1673.9,868.5 1662.7,881.6 1658.9,894.7 1653.3,907.7 1644.0,892.8 1638.4,876.0 1632.8,872.3" fill="#4a86d0"/><polygon points="1672.0,855.5 1688.8,848.0 1700.0,857.3 1700.0,890.9 1690.7,881.6 1681.3,868.5" fill="#8ab2e4"/><polygon points="1660.8,905.9 1664.5,904.0 1665.5,911.5 1662.7,912.4" fill="#4a86d0"/><polygon points="1684.3,858.2 1696.4,862.2 1708.5,864.3 1718.6,870.3 1724.7,880.4 1726.7,892.6 1718.6,902.7 1712.6,896.6 1704.5,890.5 1700.4,884.5 1690.3,882.5 1682.2,870.3" fill="#8ab2e4"/><polygon points="1578.7,854.5 1588.0,857.3 1599.2,864.8 1606.7,873.2 1597.3,874.1 1588.0,866.7 1580.5,860.1" fill="#ffffff" stroke="#ffffff" stroke-width="0.6"/><polygon points="1543.6,854.5 1545.4,853.6 1556.3,873.2 1574.0,899.3 1571.6,900.3 1554.0,874.5" fill="#ffffff" stroke="#ffffff" stroke-width="0.6"/><polygon points="1701.4,894.6 1710.5,908.7 1716.6,924.9 1709.5,922.9 1701.4,904.7" fill="#6d9edb"/><polygon points="1695.4,911.8 1703.5,914.8 1721.7,937.0 1720.7,944.1 1713.6,942.1 1699.4,924.9" fill="#6d9edb"/><polygon points="1719.6,946.1 1740.9,951.2 1740.9,955.2 1720.7,951.2" fill="#6d9edb"/><polygon points="1728.7,925.9 1738.9,916.8 1746.9,909.8 1753.0,914.8 1751.0,926.9 1742.9,940.1 1732.8,937.0" fill="#6d9edb"/><polygon points="1754.0,926.9 1768.2,923.9 1767.2,929.0 1760.1,931.0 1762.1,945.1 1754.0,944.1" fill="#6d9edb"/><polygon points="1752.0,875.4 1759.1,877.4 1758.1,886.5 1767.2,894.6 1770.2,906.7 1761.1,907.7 1754.0,888.5" fill="#6d9edb"/><polygon points="1782.3,932.0 1789.4,930.0 1801.5,935.0 1804.6,939.1 1804.6,957.3 1799.5,952.2 1791.4,939.1 1784.3,935.0" fill="#6d9edb"/><polygon points="1804.6,939.1 1817.7,949.2 1825.8,963.3 1819.7,959.3 1804.6,957.3" fill="#9dbfe8"/><polygon points="1728.7,1005.8 1732.8,991.6 1753.0,985.6 1755.0,979.5 1769.2,971.4 1775.2,967.4 1790.4,966.4 1789.4,977.5 1798.5,984.6 1805.6,965.4 1810.6,977.5 1810.6,991.6 1816.7,1003.8 1820.7,1011.9 1817.7,1026.0 1805.6,1042.2 1795.5,1053.3 1777.3,1053.3 1776.3,1046.2 1769.2,1034.1 1769.2,1030.1 1759.1,1026.0 1746.9,1030.1 1730.8,1033.1 1724.7,1029.0 1728.7,1022.0" fill="#4f8ad2"/><polygon points="1782.3,1062.4 1790.4,1063.4 1785.4,1071.5 1781.3,1070.5" fill="#4f8ad2"/><polygon points="1856.1,1050.3 1864.2,1064.4 1852.1,1076.6 1851.1,1070.5" fill="#7ba7df"/><polygon points="1823.8,1086.7 1848.0,1072.5 1849.0,1077.6 1837.9,1084.6 1827.8,1091.7" fill="#7ba7df"/><polygon points="1431.2,876.0 1436.8,862.9 1448.0,853.6 1455.5,840.5 1468.5,838.7 1485.3,835.9 1490.9,836.8 1496.5,846.1 1515.2,848.0 1528.3,849.9 1548.8,844.3 1544.1,855.5 1554.4,874.1 1561.9,883.5 1569.3,894.7 1573.1,900.3 1588.0,900.3 1582.4,913.3 1569.3,930.1 1565.6,939.5 1563.7,950.7 1567.5,965.6 1552.5,974.9 1548.8,988.0 1546.9,999.2 1535.7,1010.4 1517.1,1016.0 1511.5,1012.3 1507.7,1001.1 1500.3,984.3 1498.4,965.6 1502.1,946.9 1492.8,933.9 1490.0,924.5 1490.9,919.9 1476.0,915.2 1453.6,918.0 1440.5,911.5 1433.1,902.1 1431.2,890.9" fill="#9dbfe8"/><polygon points="1431.2,876.0 1436.8,862.9 1448.0,853.6 1455.5,840.5 1485.3,835.9 1496.5,846.1 1528.3,849.9 1548.8,844.3 1544.1,855.5 1554.4,874.1 1528.3,876.0 1505.9,872.3 1481.6,881.6 1457.3,868.5" fill="#7ba7df"/><polygon points="1528.3,876.0 1554.4,874.1 1561.9,883.5 1569.3,894.7 1550.7,909.6 1539.5,917.1 1524.5,902.1" fill="#8ab2e4"/><polygon points="1479.7,898.4 1489.1,896.5 1504.0,898.4 1500.3,909.6 1490.9,917.1 1481.6,913.3" fill="#7ba7df"/><polygon points="1500.3,945.1 1517.1,946.9 1522.7,958.1 1522.7,969.3 1498.4,969.3" fill="#8ab2e4"/><polygon points="1507.7,1001.1 1517.1,997.3 1532.0,988.0 1543.2,984.3 1546.9,999.2 1535.7,1010.4 1517.1,1016.0 1511.5,1012.3" fill="#6d9edb"/><polygon points="1573.1,900.3 1589.9,900.3 1582.4,915.2 1569.3,932.0 1567.5,922.7" fill="#eef0f3"/><polygon points="1574.9,969.3 1588.0,958.1 1589.9,967.5 1580.5,988.0 1574.9,991.7 1572.1,984.3" fill="#9dbfe8"/></g></svg>
<div style="position:absolute;left:1092.5px;top:659.4px;width:37px;height:37px;box-sizing:border-box;border:1.5px solid #e3e5e8;border-radius:5px;background:#fff"></div>
<div style="position:absolute;left:1092.5px;top:710.3px;width:37px;height:37px;box-sizing:border-box;border:1.5px solid #e3e5e8;border-radius:5px;background:#fff"></div>
<svg style="position:absolute;left:1092.5px;top:659.4px" width="37" height="88"><g stroke="#232e3c" stroke-width="2"><line x1="12.5" y1="19.5" x2="24.5" y2="19.5"/><line x1="18.5" y1="13.5" x2="18.5" y2="25.5"/><line x1="12.5" y1="70" x2="24.5" y2="70"/></g></svg>
</body></html>
